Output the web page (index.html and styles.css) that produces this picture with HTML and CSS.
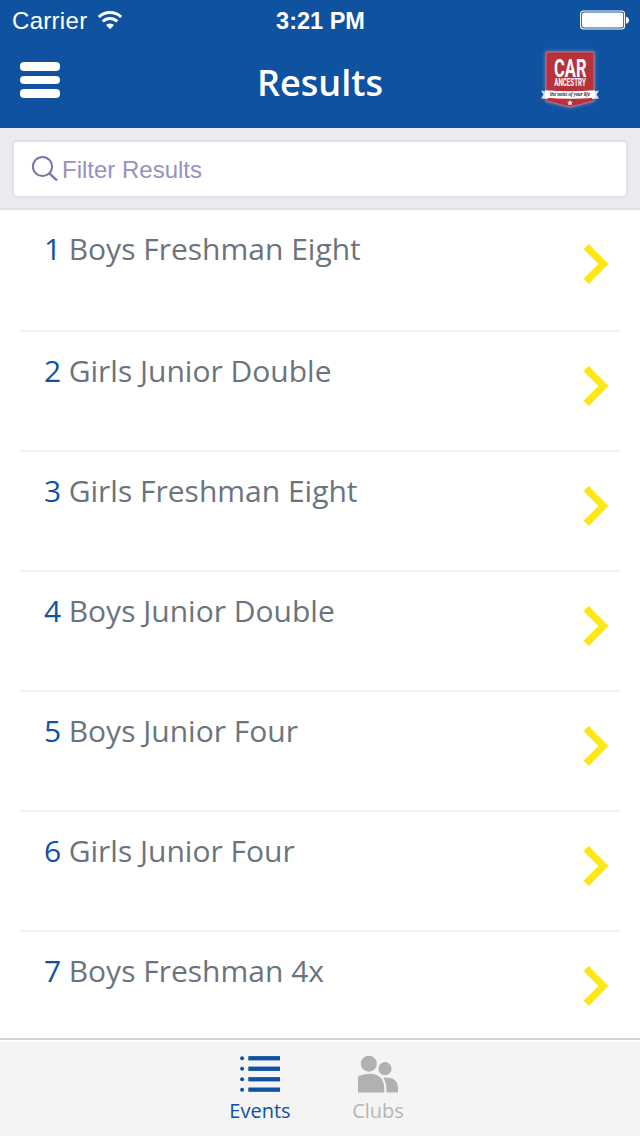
FILE: index.html
```html
<!DOCTYPE html>
<html lang="en">
<head>
<meta charset="UTF-8" />
<meta name="viewport" content="width=device-width, initial-scale=1" />
<title>Results</title>
<link rel="stylesheet" href="styles.css">
</head>
<body>
<!-- shared chevron for the result rows -->
<svg class="defs" width="0" height="0">
  <symbol id="chevron" viewBox="0 0 26 40">
    <path d="M3.1 2.6 L20.4 20 L3.1 37.4" fill="none" stroke="#ffe617" stroke-width="7.2" />
  </symbol>
</svg>
<header>
  <div class="status-bar">
    <div class="carrier">
      <span>Carrier</span>
      <svg width="26" height="20" viewBox="0 0 26 20" fill="none" stroke="#fff" stroke-width="2.9">
        <path d="M1.8 7 A16 16 0 0 1 24.2 7" />
        <path d="M5.7 11.4 A10.5 10.5 0 0 1 20.3 11.4" />
        <path d="M13 19.3 L9 15.1 A5.8 5.8 0 0 1 17 15.1 Z" fill="#fff" stroke="none" />
      </svg>
    </div>
    <div class="time">3:21 PM</div>
    <div class="battery">
      <svg width="49" height="20" viewBox="0 0 49 20">
        <rect x="0.6" y="1" width="44" height="18" rx="3" fill="none" stroke="#fff" stroke-width="1.1" />
        <rect x="2" y="2.5" width="41.2" height="15" rx="1.8" fill="#fff" />
        <path d="M46 6.7 Q49 7.5 49 10.2 Q49 13 46 13.8 Z" fill="#fff" />
      </svg>
    </div>
  </div>
  <div class="title-bar">
    <div class="menu"><span></span><span></span><span></span></div>
    <h1>Results</h1>
    <svg class="logo" width="70" height="70" viewBox="0 0 70 70">
      <path class="badge" d="M11 10 H59 V59 L35 65 L11 59 Z" fill="#b5333b" stroke="#d76a76" stroke-width="1" />
      <text class="logo-car" x="35.3" y="19.7" textLength="32.5" lengthAdjust="spacingAndGlyphs" text-anchor="middle" transform="scale(1 1.8)">CAR</text>
      <text class="logo-ancestry" x="35" y="31.2" textLength="31.5" lengthAdjust="spacingAndGlyphs" text-anchor="middle" transform="scale(1 1.4)">ANCESTRY</text>
      <path d="M6 48.5 L13 50 V57 L6 56.5 L8.5 52.5 Z M64 48.5 L57 50 V57 L64 56.5 L61.5 52.5 Z" fill="#e4e2e6" />
      <path d="M10 48.3 Q35 50 60 48.3 V55.8 Q35 57.8 10 55.8 Z" fill="#fff" />
      <text class="logo-tagline" x="35" y="54.4" textLength="40" lengthAdjust="spacingAndGlyphs" text-anchor="middle">the notes of your life</text>
      <path d="M35 58.6 L35.7 60.1 L37.3 60.3 L36.1 61.4 L36.4 63 L35 62.2 L33.6 63 L33.9 61.4 L32.7 60.3 L34.3 60.1 Z" fill="#fff" stroke="#fff" stroke-width=".5" />
    </svg>
  </div>
</header>
<div class="search">
  <div class="search-box">
    <svg width="28" height="28" viewBox="0 0 28 28" fill="none" stroke="#7b74a8" stroke-width="2">
      <circle cx="11.5" cy="11.5" r="9.6" />
      <path d="M18.3 18.3 L26 25.3" stroke-width="2.3" />
    </svg>
    <span>Filter Results</span>
  </div>
</div>
<ul class="results">
  <li><span class="num">1</span><span class="name">Boys Freshman Eight</span><svg class="chevron"><use href="#chevron" /></svg></li>
  <li><span class="num">2</span><span class="name">Girls Junior Double</span><svg class="chevron"><use href="#chevron" /></svg></li>
  <li><span class="num">3</span><span class="name">Girls Freshman Eight</span><svg class="chevron"><use href="#chevron" /></svg></li>
  <li><span class="num">4</span><span class="name">Boys Junior Double</span><svg class="chevron"><use href="#chevron" /></svg></li>
  <li><span class="num">5</span><span class="name">Boys Junior Four</span><svg class="chevron"><use href="#chevron" /></svg></li>
  <li><span class="num">6</span><span class="name">Girls Junior Four</span><svg class="chevron"><use href="#chevron" /></svg></li>
  <li><span class="num">7</span><span class="name">Boys Freshman 4x</span><svg class="chevron"><use href="#chevron" /></svg></li>
</ul>
<footer>
  <div class="tab active">
    <svg width="40" height="38" viewBox="0 0 40 38" fill="#0f529f">
      <circle cx="2.1" cy="3.3" r="2" /><rect x="8.3" y="1.1" width="31.7" height="4.3" />
      <circle cx="2.1" cy="13.7" r="2" /><rect x="8.3" y="11.6" width="31.7" height="4.3" />
      <circle cx="2.1" cy="24.2" r="2" /><rect x="8.3" y="22.1" width="31.7" height="4.3" />
      <circle cx="2.1" cy="34.7" r="2" /><rect x="8.3" y="32.5" width="31.7" height="4.3" />
    </svg>
    <span>Events</span>
  </div>
  <div class="tab">
    <svg width="40" height="38" viewBox="0 0 40 38" fill="#b0b2b1">
      <circle cx="10.8" cy="8.7" r="8" />
      <circle cx="27" cy="13.7" r="6.6" />
      <path d="M0 37.4 V21.5 Q5 18.8 11.5 18.8 C21 18.8 26.2 24.5 26.2 32.5 V37.4 Z" />
      <path d="M28.4 37.4 V32.5 Q28.4 27 25.3 22.7 C34 21.3 40 25.5 40 33 V37.4 Z" />
    </svg>
    <span>Clubs</span>
  </div>
</footer>
</body>
</html>
```
FILE: styles.css
```css
* {
  box-sizing: border-box;
}
body {
  font-family: "Open Sans", sans-serif;
  margin: 0;
  height: 1136px;
  display: flex;
  flex-direction: column;
  overflow: hidden;
  background: #fff;
  color: #6b747d;
}
svg {
  display: block;
  flex: none;
}
.defs {
  position: absolute;
}

/* Header */
header {
  flex: none;
  height: 128px;
  background: #0f529f;
  color: #fff;
}
.status-bar {
  display: grid;
  grid-template-columns: 1fr auto 1fr;
  align-items: center;
  height: 40px;
  padding: 0 11px 0 12px;
  font-family: "Liberation Sans", Arial, sans-serif;
  font-size: 24px;
}
.carrier {
  display: flex;
  align-items: center;
  gap: 10px;
  letter-spacing: 0.3px;
}
.carrier span,
.time {
  padding-top: 2px;
}
.time {
  font-weight: bold;
  font-size: 23.5px;
}
.battery {
  display: flex;
  justify-content: flex-end;
}
.title-bar {
  display: grid;
  grid-template-columns: 105px 1fr 105px;
  align-items: start;
}
.menu {
  display: grid;
  gap: 5px;
  padding: 22px 0 0 20px;
}
.menu span {
  width: 40px;
  height: 8.5px;
  border-radius: 4px;
  background: #fff;
}
h1 {
  margin: 0;
  padding-top: 18px;
  font-size: 36px;
  font-weight: 600;
  line-height: 50px;
  text-align: center;
}
.logo {
  margin-top: 2px;
}
.badge {
  filter: drop-shadow(0 0 2px #5d90d4);
}
.logo text {
  fill: #fff;
  font-family: Roboto, sans-serif;
  font-weight: bold;
}
.logo .logo-car {
  font-size: 14.6px;
}
.logo .logo-ancestry {
  font-size: 7.2px;
}
.logo .logo-tagline {
  fill: #222;
  font-family: "Liberation Serif", serif;
  font-style: italic;
  font-size: 5.5px;
}

/* Filter field */
.search {
  flex: none;
  height: 82px;
  padding: 12px;
  background: #ebeaf1;
  border-bottom: 2px solid #e0dfe9;
}
.search-box {
  display: flex;
  align-items: center;
  gap: 3px;
  height: 58px;
  padding-left: 17px;
  background: #fff;
  border: 2px solid #e1dfea;
  border-radius: 5px;
  color: #9792bb;
  font-family: "Liberation Sans", Arial, sans-serif;
  font-size: 24px;
}
.search-box span {
  padding-top: 2px;
}

/* Result rows */
.results {
  flex: 1;
  min-height: 0;
  overflow: hidden;
  list-style: none;
  margin: 0;
  padding: 0 20px;
}
.results li {
  display: flex;
  height: 120px;
  padding: 18px 11px 0 24px;
  border-bottom: 2px solid #f2f2f3;
  font-size: 30px;
  line-height: 42px;
}
.results li:first-child {
  height: 122px;
}
.num {
  width: 24.7px;
  color: #0f529f;
}
.name {
  flex: 1;
}
.chevron {
  width: 26px;
  height: 40px;
  margin-top: 16px;
}

/* Tabs */
footer {
  flex: none;
  display: flex;
  justify-content: center;
  height: 98px;
  padding-right: 2px;
  border-top: 2px solid #d3d3d3;
  box-shadow: inset 0 2px #fff;
  background: #f4f4f4;
}
.tab {
  display: flex;
  flex-direction: column;
  align-items: center;
  width: 118px;
  padding-top: 15px;
  color: #b4b6b5;
  font-size: 20px;
  line-height: 28px;
}
.tab span {
  padding-top: 4px;
}
.tab.active {
  color: #0f529f;
}
```
